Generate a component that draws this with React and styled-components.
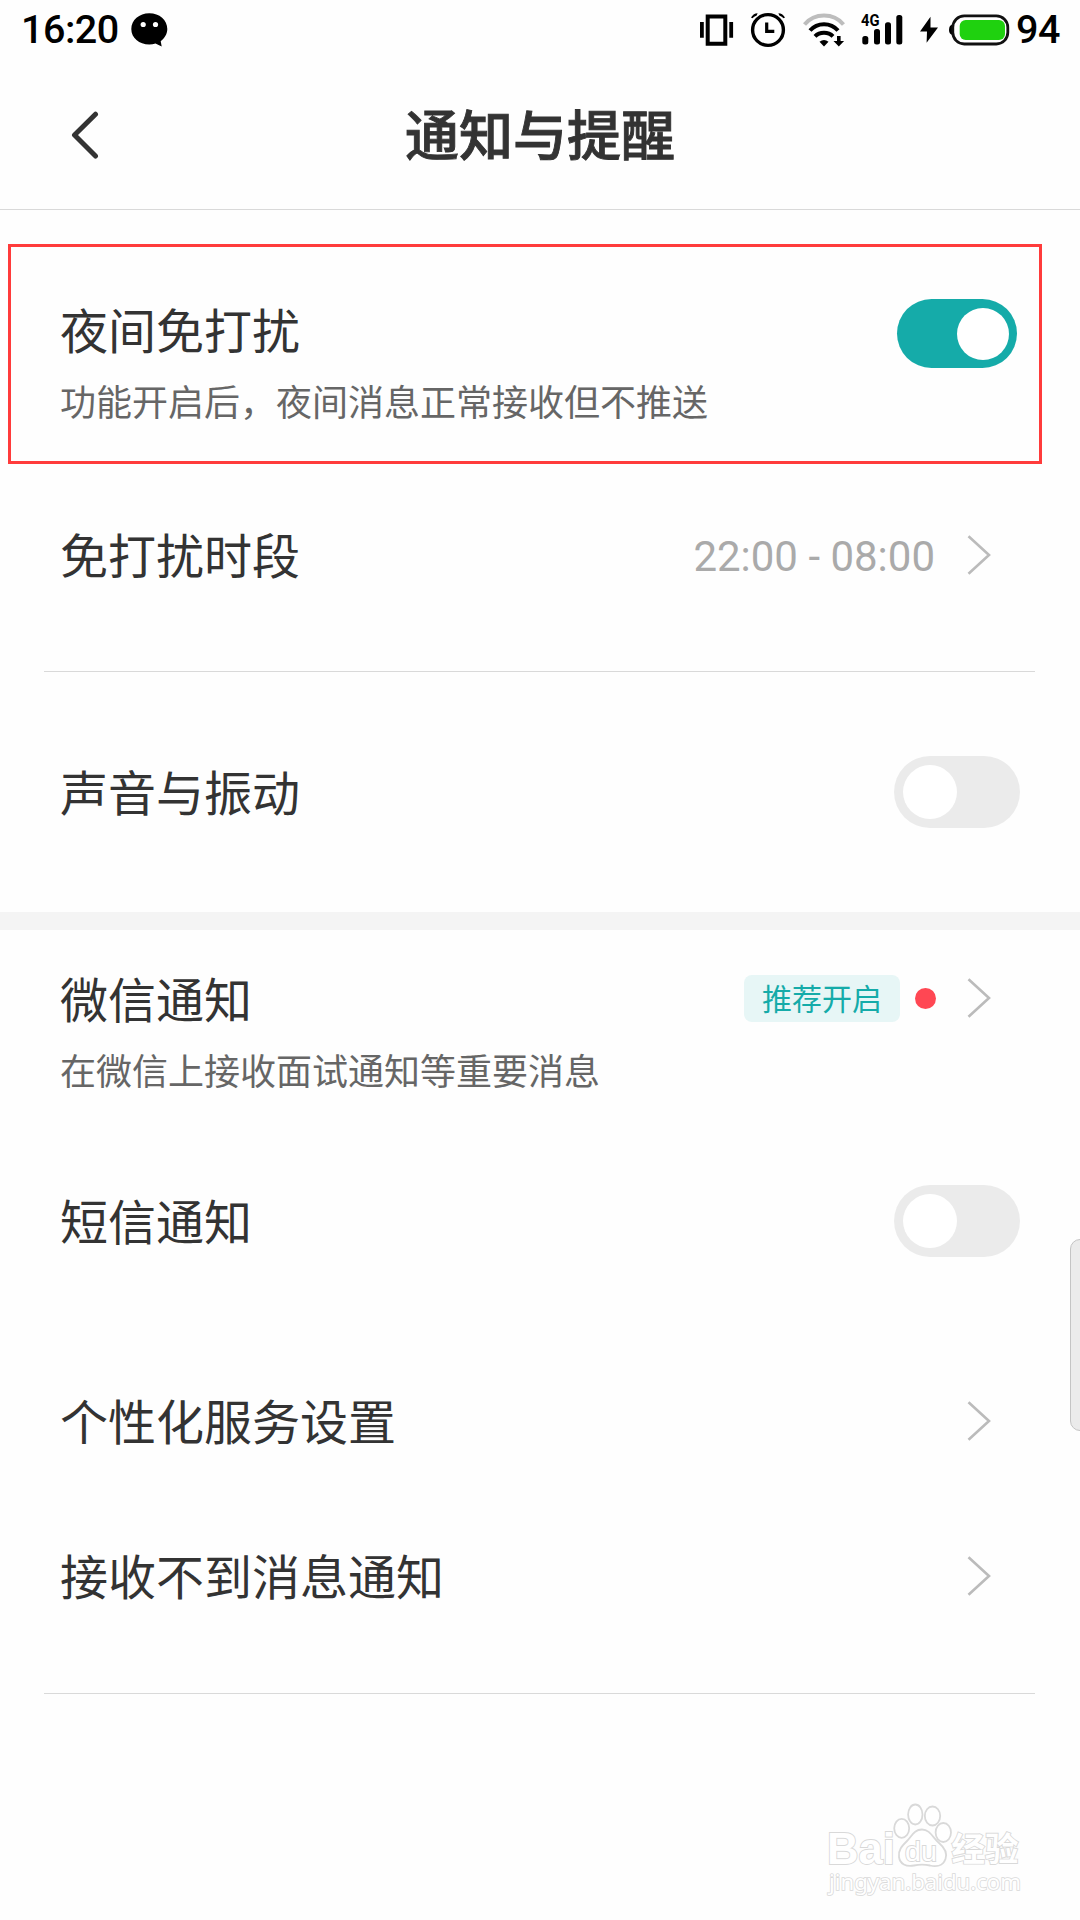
import React, { useState } from "react";
import styled, { createGlobalStyle } from "styled-components";

const ChevronRight = () => (
  <Chevron viewBox="0 0 24 40" width="24" height="40">
    <path d="M1.5 1.2 L22 20 L1.5 38.8" />
  </Chevron>
);

const StatusIcons = () => (
  <>
    <svg width="34" height="40" viewBox="0 0 34 40">
      <path d="M7.7 6.5h17.6v27.2H7.7z" fill="none" stroke="#000" strokeWidth="4" />
      <path d="M0 12h3.8v15.8H0zM29.3 12h3.8v15.8h-3.8z" />
    </svg>
    <svg width="36" height="40" viewBox="0 0 36 40">
      <circle cx="18" cy="20" r="15.4" fill="none" stroke="#000" strokeWidth="3.4" />
      <path d="M16.7 12.5v8.9h7.6" fill="none" stroke="#000" strokeWidth="3.2" />
      <path d="M1 7.5Q3.5 3.3 7.6 3.2L6.7 5.4Q4 6.3 2.4 8.2zM35 7.5Q32.5 3.3 28.4 3.2L29.3 5.4Q32 6.3 33.6 8.2z" />
    </svg>
    <svg width="42" height="40" viewBox="0 0 42 40">
      <g fill="none" stroke="#000" strokeWidth="4">
        <path d="M1.5 14.5Q9 5.5 21 5.5T40.5 14.5" stroke="#bdbdbd" />
        <path d="M7 20.5Q12.5 14.2 21 14.2T35 20.5" />
        <path d="M12 26.3Q15.5 22.7 21 22.7T30 26.3" />
      </g>
      <path d="M16.5 31.8Q21 28 25.5 31.8L21 36.5z" />
      <path d="M34 26h3.6v5h3.5L35.8 36.5L30.5 31H34z" />
    </svg>
    <svg width="42" height="40" viewBox="0 0 42 40">
      <text x="0" y="16" fontSize="17" fontWeight="700" textLength="18.5" lengthAdjust="spacingAndGlyphs">
        4G
      </text>
      <rect x="1.3" y="26" width="6" height="8.5" rx="2.5" />
      <rect x="13" y="19" width="6" height="15.5" rx="2.5" />
      <rect x="24" y="12.3" width="6" height="22.2" rx="2.5" />
      <rect x="35.3" y="5" width="6" height="29.5" rx="2.5" />
    </svg>
    <svg width="18" height="40" viewBox="0 0 18 40">
      <path d="M10.5 6.7L0 21.5H7L6.6 32.8L18 17.5H10.5z" />
    </svg>
    <svg width="61" height="40" viewBox="0 0 61 40">
      <path d="M4 14.5Q0 15 0 19.8T4 25z" />
      <rect x="3.8" y="5.8" width="55" height="28.2" rx="11.5" fill="#fff" stroke="#111" strokeWidth="2.8" />
      <rect x="10.7" y="10" width="45.3" height="20" rx="6" fill="#1fd10f" />
    </svg>
  </>
);

const WeChatIcon = () => (
  <svg width="37" height="34" viewBox="0 0 37 34">
    <path d="M18.300 0.300C28.500 0.300 36.300 7 36.300 16C36.300 21 33.700 25.200 29.700 28.200L30.700 33.500L24.500 30.600C22.500 31.200 20.500 31.500 18.300 31.500C8.200 31.500 0.300 24.800 0.300 16S8.200 0.300 18.300 0.300z" />
    <circle cx="12.2" cy="11.5" r="2.6" fill="#fff" />
    <circle cx="24.5" cy="11.5" r="2.6" fill="#fff" />
  </svg>
);

const Watermark = () => (
  <WatermarkSvg width="210" height="110" viewBox="820 1795 210 110">
    <g strokeWidth="1.8">
      <text x="827" y="1864" fontSize="44" fontWeight="700" fontFamily="Liberation Sans" textLength="68" lengthAdjust="spacingAndGlyphs">
        Bai
      </text>
      <ellipse cx="901.7" cy="1828.3" rx="7.5" ry="9.5" />
      <ellipse cx="915.3" cy="1814.5" rx="7.2" ry="10" />
      <ellipse cx="932.5" cy="1816" rx="7.7" ry="9.5" />
      <ellipse cx="943.3" cy="1832.5" rx="7.7" ry="9.5" />
      <path d="M922 1829.500C930 1829.500 933 1838 939 1843C945 1848 947.500 1853 945.500 1859C943 1866 936 1867 930 1865.500C925 1864.500 919 1864.500 914 1865.500C906 1867 900 1864 899 1857C898 1850 902 1846 907 1841C912 1836 914 1829.500 922 1829.500z" />
      <text x="905" y="1860.5" fontSize="28" fontFamily="Liberation Sans" textLength="32" lengthAdjust="spacingAndGlyphs">
        du
      </text>
      <text x="951.5" y="1861" fontSize="33.5" fontWeight="700" fontFamily="Noto Sans CJK SC">
        经验
      </text>
    </g>
    <text x="829" y="1890" fontSize="22" strokeWidth="1.6" fontFamily="Noto Sans" textLength="192" lengthAdjust="spacingAndGlyphs">
      jingyan.baidu.com
    </text>
  </WatermarkSvg>
);

const App = () => {
  const [settings, setSettings] = useState({
    night: true,
    sound: false,
    sms: false,
  });

  const toggle = (name) =>
    setSettings({ ...settings, [name]: !settings[name] });

  return (
    <Page>
      <GlobalStyle />
      <StatusBar>
        <StatusText>16:20</StatusText>
        <WeChatIcon />
        <StatusGroup>
          <StatusIcons />
        </StatusGroup>
        <StatusText>94</StatusText>
      </StatusBar>

      <Header>
        <BackButton>
          <svg width="28" height="50" viewBox="0 0 28 50">
            <path d="M24.5 4.2L3.5 25L24.5 46" />
          </svg>
        </BackButton>
        <h1>通知与提醒</h1>
      </Header>

      <Highlight>
        <Texts>
          <Label>夜间免打扰</Label>
          <Hint>功能开启后，夜间消息正常接收但不推送</Hint>
        </Texts>
        <Switch $on={settings.night} onClick={() => toggle("night")} />
      </Highlight>

      <Row $height={182}>
        <Label>免打扰时段</Label>
        <Side>
          <Period>22:00 - 08:00</Period>
          <ChevronRight />
        </Side>
      </Row>
      <Divider $top={25} />
      <Row $height={240}>
        <Label>声音与振动</Label>
        <Switch $on={settings.sound} onClick={() => toggle("sound")} />
      </Row>

      <Band />

      <TallRow>
        <Texts>
          <Label>微信通知</Label>
          <Hint>在微信上接收面试通知等重要消息</Hint>
        </Texts>
        <Side>
          <Badge>推荐开启</Badge>
          <Dot />
          <ChevronRight />
        </Side>
      </TallRow>
      <Row $height={162}>
        <Label>短信通知</Label>
        <Switch $on={settings.sms} onClick={() => toggle("sms")} />
      </Row>
      <Links>
        <Row $height={155}>
          <Label>个性化服务设置</Label>
          <Side>
            <ChevronRight />
          </Side>
        </Row>
        <Row $height={155}>
          <Label>接收不到消息通知</Label>
          <Side>
            <ChevronRight />
          </Side>
        </Row>
      </Links>
      <Divider $top={40} />

      <EdgeHandle />
      <Watermark />
    </Page>
  );
};

const GlobalStyle = createGlobalStyle`
  * {
    box-sizing: border-box;
  }
  body {
    margin: 0;
    background: #fefefe;
    font-family: Roboto, "Noto Sans CJK SC", sans-serif;
  }
`;

const Page = styled.div`
  position: relative;
  width: 1080px;
  height: 1920px;
  overflow: hidden;
  color: #333;
`;

const StatusBar = styled.div`
  display: flex;
  align-items: center;
  height: 60px;
  padding: 0 20px 0 21px;
  gap: 12px;
  color: #000;
`;

const StatusText = styled.span`
  font-size: 39.5px;
  font-weight: 500;
  line-height: 62px;
  letter-spacing: -0.5px;
`;

const StatusGroup = styled.div`
  display: flex;
  align-items: center;
  gap: 16.5px;
  margin-left: auto;
  margin-right: -6px;

  svg:last-child {
    margin-left: -5px;
  }
`;

const Header = styled.header`
  display: grid;
  grid-template-columns: 1fr auto 1fr;
  align-items: center;
  height: 150px;
  border-bottom: 1px solid #d9d9d9;

  h1 {
    margin: 0;
    padding-top: 7px;
    font-size: 54px;
    line-height: 80px;
    font-weight: 500;
    -webkit-text-stroke: 0.9px #333;
  }
`;

const BackButton = styled.button`
  display: flex;
  padding: 1px 0 0 71px;
  border: none;
  background: none;

  path {
    fill: none;
    stroke: #333;
    stroke-width: 5;
    stroke-linecap: round;
    stroke-linejoin: round;
  }
`;

const Highlight = styled.section`
  display: flex;
  justify-content: space-between;
  width: 1034px;
  height: 220px;
  margin: 34px 0 0 8px;
  padding: 47px 22px 0 49px;
  border: 3px solid #ff3b3b;

  > button {
    margin-top: 5px;
  }
`;

const Row = styled.div`
  display: flex;
  align-items: center;
  justify-content: space-between;
  height: ${({ $height }) => $height}px;
  padding: 0 60px;
`;

const TallRow = styled.div`
  display: flex;
  align-items: flex-start;
  justify-content: space-between;
  height: 210px;
  padding: 33px 60px 0;
`;

const Links = styled.div`
  margin-top: 41px;
`;

const Texts = styled.div`
  display: flex;
  flex-direction: column;
`;

const Label = styled.span`
  height: 72px;
  font-size: 48px;
  line-height: 77px;
`;

const Hint = styled.span`
  height: 72px;
  font-size: 36px;
  line-height: 77px;
  color: #666;
`;

const Side = styled.div`
  display: flex;
  align-items: center;
  height: 70px;
  margin-right: 29px;
`;

const Period = styled.span`
  margin-right: 32px;
  padding-top: 2px;
  font-size: 42px;
  color: #aaa;
`;

const Chevron = styled.svg`
  path {
    fill: none;
    stroke: #bbb;
    stroke-width: 2.6;
  }
`;

const Badge = styled.span`
  width: 156px;
  height: 47px;
  border-radius: 8px;
  font-size: 30px;
  line-height: 49px;
  text-align: center;
  color: #15aba9;
  background: #e7f6f6;
`;

const Dot = styled.i`
  width: 21px;
  height: 21px;
  margin: 0 31px 0 15px;
  border-radius: 50%;
  background: #ff4753;
`;

const Switch = styled.button`
  display: flex;
  align-items: center;
  justify-content: ${({ $on }) => ($on ? "flex-end" : "flex-start")};
  width: ${({ $on }) => ($on ? 120 : 126)}px;
  height: ${({ $on }) => ($on ? 69 : 72)}px;
  padding: 0 ${({ $on }) => ($on ? 8 : 9)}px;
  border: none;
  border-radius: 36px;
  background: ${({ $on }) => ($on ? "#15aba9" : "#ebebeb")};

  &::before {
    content: "";
    width: ${({ $on }) => ($on ? 52 : 54)}px;
    height: ${({ $on }) => ($on ? 52 : 54)}px;
    border-radius: 50%;
    background: #fff;
  }
`;

const Divider = styled.div`
  height: 1px;
  margin: ${({ $top }) => $top}px 45px 0 44px;
  background: #d9d9d9;
`;

const Band = styled.div`
  height: 18px;
  background: #f4f4f4;
`;

const EdgeHandle = styled.div`
  position: absolute;
  top: 1239px;
  right: -10px;
  width: 20px;
  height: 192px;
  border: 1px solid #c4c4c4;
  border-radius: 12px;
  background: #ebebeb;
`;

const WatermarkSvg = styled.svg`
  position: absolute;
  right: 50px;
  bottom: 15px;
  fill: #fff;
  stroke: #d9d9d9;

  text {
    paint-order: stroke;
  }
`;

export default App;
